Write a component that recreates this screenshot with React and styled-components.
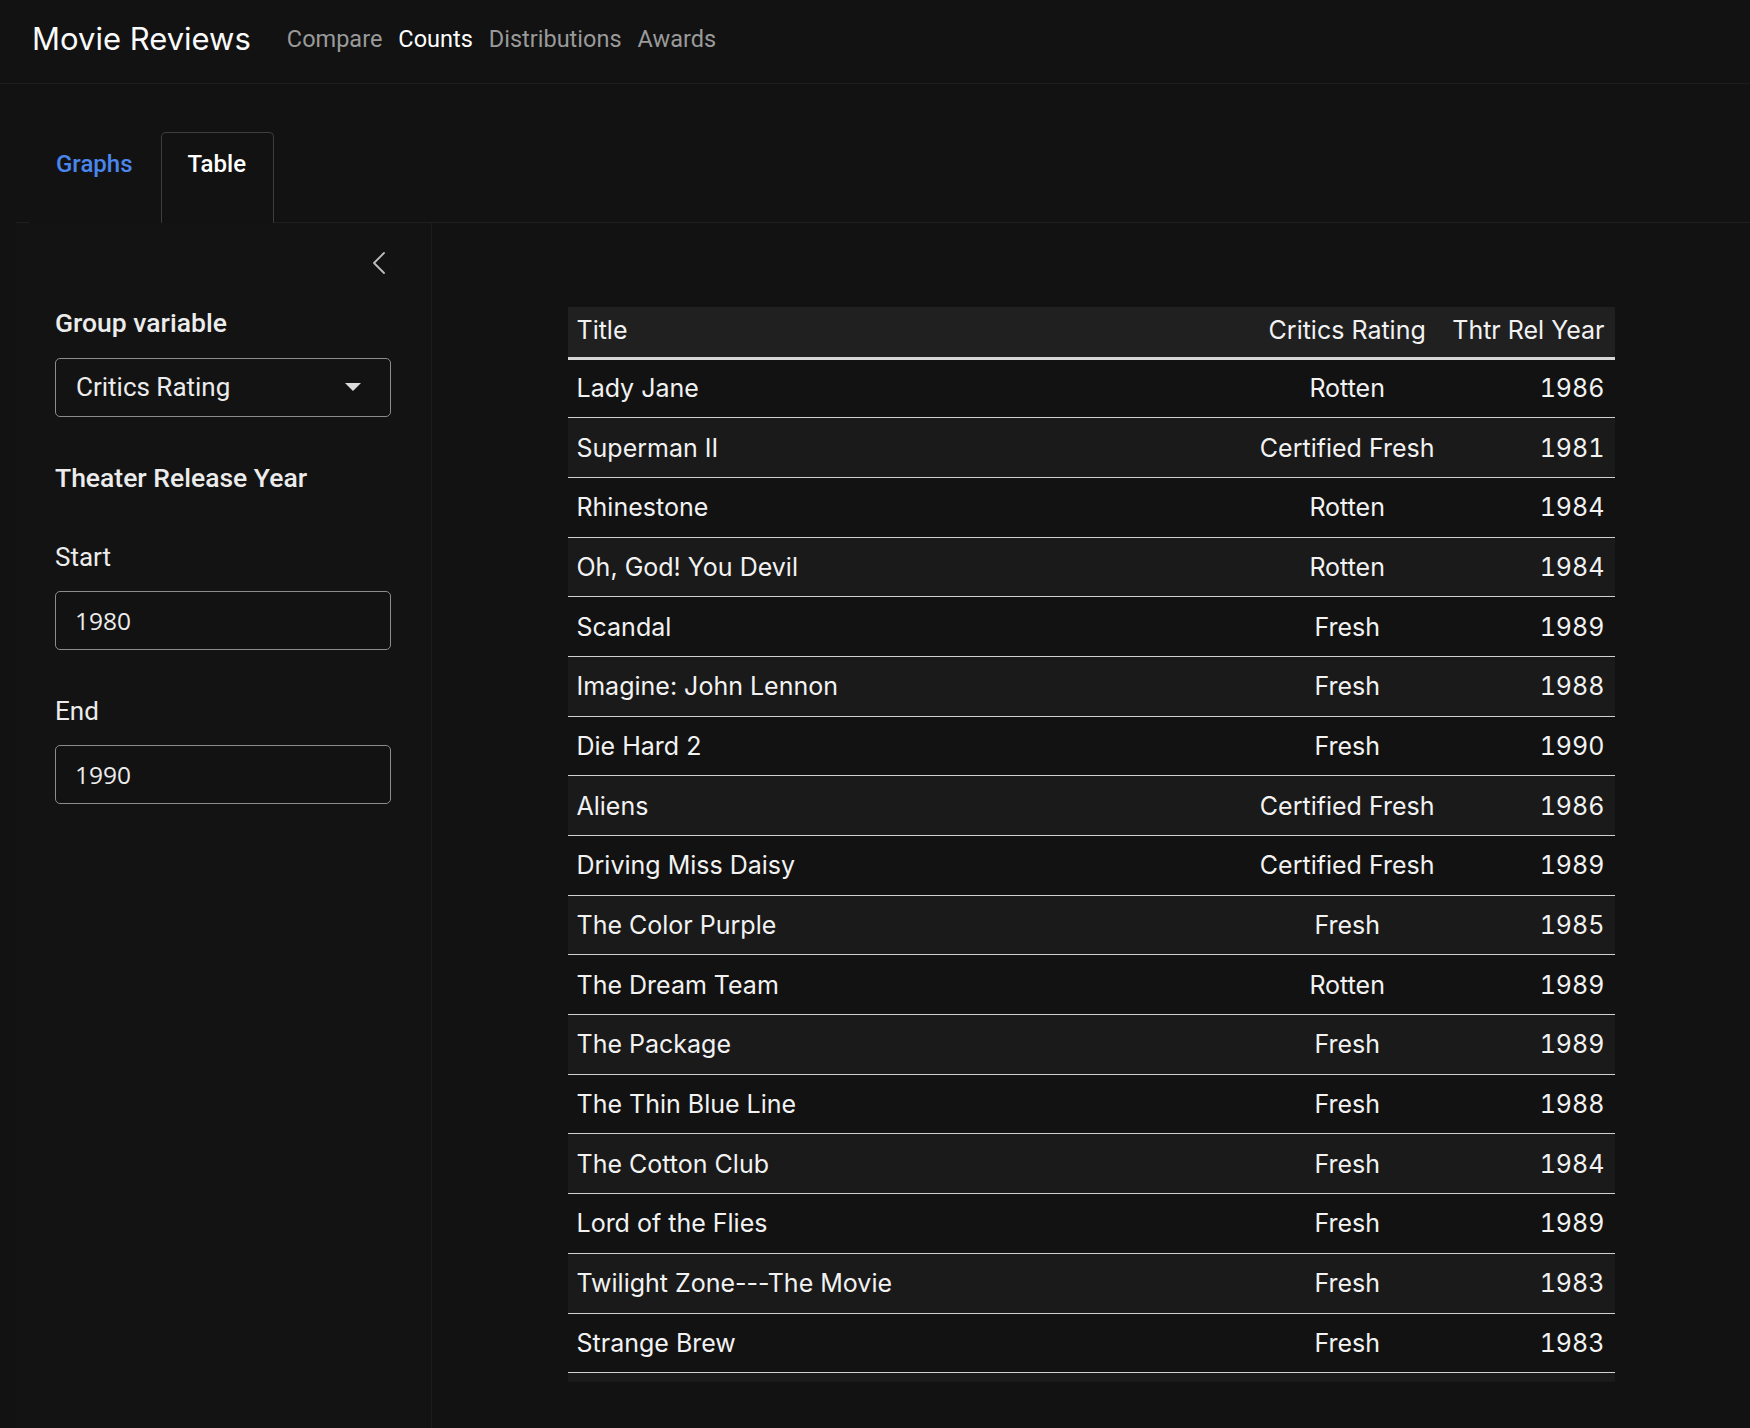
import React, { useState } from "react";
import styled, { createGlobalStyle } from "styled-components";

const movies = [
  { title: "Lady Jane", rating: "Rotten", year: 1986 },
  { title: "Superman II", rating: "Certified Fresh", year: 1981 },
  { title: "Rhinestone", rating: "Rotten", year: 1984 },
  { title: "Oh, God! You Devil", rating: "Rotten", year: 1984 },
  { title: "Scandal", rating: "Fresh", year: 1989 },
  { title: "Imagine: John Lennon", rating: "Fresh", year: 1988 },
  { title: "Die Hard 2", rating: "Fresh", year: 1990 },
  { title: "Aliens", rating: "Certified Fresh", year: 1986 },
  { title: "Driving Miss Daisy", rating: "Certified Fresh", year: 1989 },
  { title: "The Color Purple", rating: "Fresh", year: 1985 },
  { title: "The Dream Team", rating: "Rotten", year: 1989 },
  { title: "The Package", rating: "Fresh", year: 1989 },
  { title: "The Thin Blue Line", rating: "Fresh", year: 1988 },
  { title: "The Cotton Club", rating: "Fresh", year: 1984 },
  { title: "Lord of the Flies", rating: "Fresh", year: 1989 },
  { title: "Twilight Zone---The Movie", rating: "Fresh", year: 1983 },
  { title: "Strange Brew", rating: "Fresh", year: 1983 },
];

const navLinks = ["Compare", "Counts", "Distributions", "Awards"];

const GlobalStyle = createGlobalStyle`
  html, body {
    margin: 0;
    background: #121212;
    color: #f0f0f0;
    font-family: Roboto, "Noto Sans", sans-serif;
  }
  * {
    box-sizing: border-box;
  }
`;

const Page = styled.div`
  min-height: 1428px;
  display: flex;
  flex-direction: column;
  background: #121212;
`;

const Navbar = styled.nav`
  height: 84px;
  display: flex;
  align-items: center;
  padding: 0 32px 6px;
  border-bottom: 1px solid #1d1d1d;
`;

const Brand = styled.div`
  font-family: Inter, sans-serif;
  font-size: 31px;
  color: #fafafa;
  margin-right: 28px;
`;

const NavLink = styled.a`
  font-size: 23.5px;
  padding: 0 8px;
  color: ${(p) => (p.active ? "#ffffff" : "#9a9a9a")};
  cursor: pointer;
`;

const Body = styled.div`
  flex: 1;
  display: flex;
  flex-direction: column;
  padding-left: 16px;
`;

const TabBar = styled.div`
  display: flex;
  padding: 48px 0 0 13px;
  border-bottom: 1px solid #1f1f1f;
`;

const Tab = styled.div`
  height: 91px;
  margin-bottom: -1px;
  padding: 13px 27px 0 26px;
  font-size: 24px;
  font-weight: 500;
  line-height: 36px;
  color: ${(p) => (p.active ? "#ffffff" : "#4a86ec")};
  background: #121212;
  border: 1px solid ${(p) => (p.active ? "#3e3e3e" : "transparent")};
  border-bottom-color: ${(p) => (p.active ? "#121212" : "transparent")};
  border-radius: 5px 5px 0 0;
  cursor: pointer;
`;

const Layout = styled.div`
  flex: 1;
  display: flex;
`;

const Sidebar = styled.aside`
  width: 416px;
  flex-shrink: 0;
  display: flex;
  flex-direction: column;
  padding: 28px 40px 0 39px;
  background: #131313;
  border-right: 1px solid #1c1c1c;
`;

const CollapseButton = styled.button`
  align-self: flex-end;
  margin-right: 1px;
  width: 22px;
  height: 24px;
  padding: 0;
  border: none;
  background: none;
  color: #bdbdbd;
  display: flex;
  align-items: center;
  justify-content: center;
  cursor: pointer;
`;

const GroupLabel = styled.div`
  font-size: 26.5px;
  font-weight: 500;
  line-height: 30px;
  color: #ececec;
  margin-top: ${(p) => p.gap}px;
`;

const FieldLabel = styled.div`
  font-size: 26px;
  line-height: 28px;
  color: #ececec;
  margin-top: ${(p) => p.gap}px;
`;

const Select = styled.div`
  margin-top: 20px;
  height: 59px;
  display: flex;
  align-items: center;
  justify-content: space-between;
  padding: 0 29px 2px 20px;
  border: 1px solid #8c8c8c;
  border-radius: 5px;
  font-size: 26px;
  color: #ececec;
  cursor: pointer;
`;

const Input = styled.input`
  margin-top: 20px;
  height: 59px;
  width: 100%;
  padding: 0 19px;
  border: 1px solid #8c8c8c;
  border-radius: 5px;
  background: #121212;
  color: #ececec;
  font-family: "Open Sans", "Noto Sans", sans-serif;
  font-size: 24.5px;
  outline: none;
`;

const Main = styled.main`
  flex: 1;
  display: flex;
  justify-content: center;
  padding-top: 84px;
`;

const Table = styled.table`
  width: 1047px;
  align-self: flex-start;
  border-collapse: collapse;
  font-family: Inter, sans-serif;
  font-size: 25px;
  color: #f2f2f2;
`;

const HeadCell = styled.th`
  height: 51px;
  padding: ${(p) => (p.align === "center" ? "0 8px 3px 12px" : "0 10px 3px 9px")};
  font-weight: 400;
  white-space: nowrap;
  background: #202020;
  border-bottom: 3px solid #d6d6d6;
  text-align: ${(p) => p.align || "left"};
  width: ${(p) => (p.w ? `${p.w}px` : "auto")};
`;

const Row = styled.tr`
  background: ${(p) => (p.striped ? "#1a1a1a" : "#121212")};
  border-bottom: 1px solid #d0d0d0;
`;

const Cell = styled.td`
  height: 59.7px;
  padding: ${(p) => (p.align === "center" ? "0 8px 0 12px" : "0 10px 0 9px")};
  white-space: nowrap;
  text-align: ${(p) => p.align || "left"};
  font-variant-numeric: ${(p) => (p.numeric ? "tabular-nums" : "normal")};
`;

const FootCell = styled.td`
  height: 9px;
  padding: 0;
  background: #1a1a1a;
`;

const ChevronLeft = () => (
  <svg width="14" height="24" viewBox="0 0 14 24" fill="none">
    <path d="M12 2 L2 12 L12 22" stroke="currentColor" strokeWidth="1.8" strokeLinecap="round" strokeLinejoin="round" />
  </svg>
);

const Caret = () => (
  <svg width="16" height="8" viewBox="0 0 16 8">
    <path d="M0 0 H16 L8 8 Z" fill="#dcdcdc" />
  </svg>
);

const App = () => {
  const [tab, setTab] = useState("Table");
  const [start, setStart] = useState("1980");
  const [end, setEnd] = useState("1990");

  return (
    <Page>
      <GlobalStyle />
      <Navbar>
        <Brand>Movie Reviews</Brand>
        {navLinks.map((link) => (
          <NavLink key={link} active={link === "Counts"}>
            {link}
          </NavLink>
        ))}
      </Navbar>
      <Body>
        <TabBar>
          {["Graphs", "Table"].map((t) => (
            <Tab key={t} active={t === tab} onClick={() => setTab(t)}>
              {t}
            </Tab>
          ))}
        </TabBar>
        <Layout>
          <Sidebar>
            <CollapseButton aria-label="Collapse sidebar">
              <ChevronLeft />
            </CollapseButton>
            <GroupLabel gap={33}>Group variable</GroupLabel>
            <Select>
              <span>Critics Rating</span>
              <Caret />
            </Select>
            <GroupLabel gap={46}>Theater Release Year</GroupLabel>
            <FieldLabel gap={50}>Start</FieldLabel>
            <Input value={start} onChange={(e) => setStart(e.target.value)} />
            <FieldLabel gap={47}>End</FieldLabel>
            <Input value={end} onChange={(e) => setEnd(e.target.value)} />
          </Sidebar>
          <Main>
            <Table>
              <thead>
                <tr>
                  <HeadCell>Title</HeadCell>
                  <HeadCell align="center" w={186}>
                    Critics Rating
                  </HeadCell>
                  <HeadCell align="right" w={172}>
                    Thtr Rel Year
                  </HeadCell>
                </tr>
              </thead>
              <tbody>
                {movies.map((m, i) => (
                  <Row key={m.title} striped={i % 2 === 1}>
                    <Cell>{m.title}</Cell>
                    <Cell align="center">{m.rating}</Cell>
                    <Cell align="right" numeric>
                      {m.year}
                    </Cell>
                  </Row>
                ))}
              </tbody>
              <tfoot>
                <tr>
                  <FootCell colSpan={3} />
                </tr>
              </tfoot>
            </Table>
          </Main>
        </Layout>
      </Body>
    </Page>
  );
};

export default App;
